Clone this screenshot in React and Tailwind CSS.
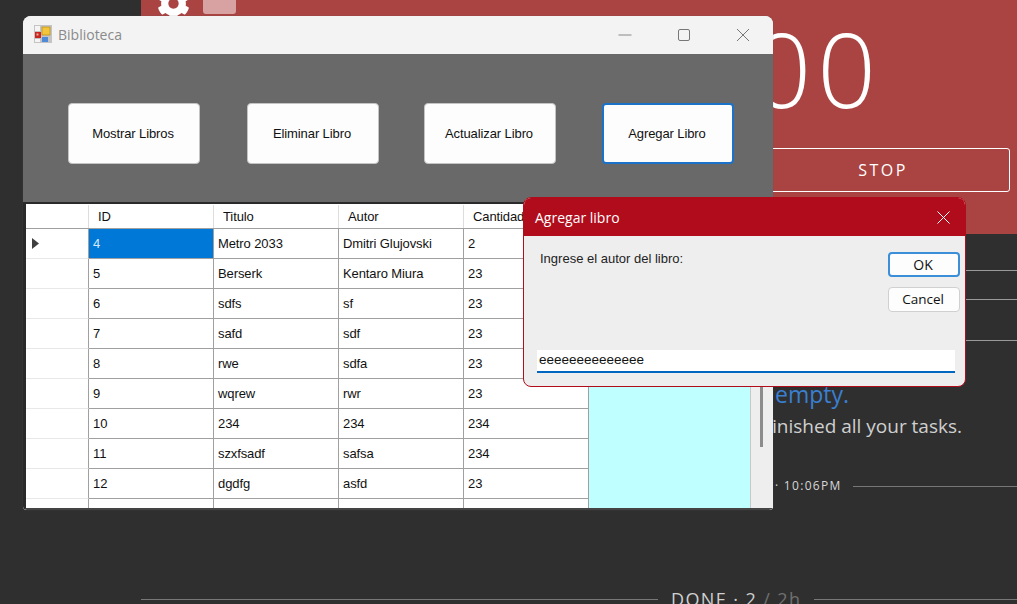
import React from "react";
import { FaCog } from "react-icons/fa";

const rows = [
  ["4", "Metro 2033", "Dmitri Glujovski", "2"],
  ["5", "Berserk", "Kentaro Miura", "23"],
  ["6", "sdfs", "sf", "23"],
  ["7", "safd", "sdf", "23"],
  ["8", "rwe", "sdfa", "23"],
  ["9", "wqrew", "rwr", "23"],
  ["10", "234", "234", "234"],
  ["11", "szxfsadf", "safsa", "234"],
  ["12", "dgdfg", "asfd", "23"],
  ["13", "asdfas", "asdfa", "435"],
];

const sans = "font-['Open_Sans','Noto_Sans',sans-serif]";
const ms = "font-['Liberation_Sans',Arial,sans-serif]";

function WinButton({ children, className }) {
  return (
    <button className={"h-[61px] w-[132px] rounded-[4px] bg-[#fdfdfd] pr-[2px] text-[13px] tracking-[-0.1px] text-[#111] " + ms + " " + className}>
      {children}
    </button>
  );
}

export default function App() {
  return (
    <div className={"relative h-[604px] w-[1017px] overflow-hidden bg-[#2f2f2f] " + sans}>
      {/* background app */}
      <div className="ml-[141px] flex flex-col">
        <div className="relative flex h-[234px] flex-col items-end bg-[#a94442] text-white">
          <div className="absolute left-[16px] top-[-13px]">
            <FaCog size={33} color="#fff" />
          </div>
          <div className="absolute left-[62px] top-0 h-[14px] w-[33px] rounded-b-[3px] bg-[#d9a2a2]" />
          <div className="mr-[135px] mt-[3px] h-[130px] text-[103px] font-light leading-[130px] tracking-[6px]">00</div>
          <div className="mr-[7px] mt-[15px] flex h-[44px] w-[254px] items-center justify-center rounded-[3px] border border-white text-[16px] tracking-[2.5px]">
            STOP
          </div>
        </div>
        <div className="ml-auto mt-[36px] h-px w-[51px] bg-[#9a9a9a]" />
        <div className="ml-auto mt-[28px] h-px w-[51px] bg-[#9a9a9a]" />
        <div className="ml-auto mt-[40px] h-px w-[51px] bg-[#9a9a9a]" />
        <div className="mt-[37px] pl-[634px] text-[23px] leading-[32px] text-[#3a7fd0]">empty.</div>
        <div className="mt-[3px] pr-[55px] text-right text-[19px] leading-[27px] text-[#cfcfcf]">finished all your tasks.</div>
        <div className="mt-[38px] flex h-4 items-center">
          <div className="ml-[634px] w-[78px] whitespace-nowrap text-[12px] leading-4 tracking-[1.3px] text-[#d6d6d6]">· 10:06PM</div>
          <div className="h-px flex-1 bg-[#777]" />
        </div>
        <div className="mt-[93px] flex h-6 items-center">
          <div className="h-px w-[517px] bg-[#777]" />
          <div className="mx-[13px] whitespace-nowrap text-[18px] leading-6 tracking-[1.4px] text-[#d0d0d0]">
            DONE · 2 <span className="text-[#707070]">/ 2h</span>
          </div>
          <div className="h-px flex-1 bg-[#777]" />
        </div>
      </div>

      {/* Biblioteca window */}
      <div className="absolute left-[23px] top-[16px] flex h-[494px] w-[750px] flex-col overflow-hidden rounded-t-[8px] rounded-b-[4px] bg-[#f3f3f3] shadow-[0_0_1px_#555]">
        <div className="flex h-[38px] items-center bg-[#f3f3f3]">
          <svg width="18" height="18" viewBox="0 0 18 18" className="mb-[2px] ml-[11px]">
            <rect x="0" y="0" width="18" height="18" fill="#c4c4c4" />
            <rect x="1" y="1" width="5" height="5" fill="#f4f4f4" />
            <rect x="1" y="7" width="6" height="6" fill="#c8261e" />
            <rect x="2.5" y="8.5" width="2" height="2" fill="#f0b0a0" />
            <rect x="8" y="2" width="8" height="8" fill="#f3c53c" stroke="#b98a10" strokeWidth="0.7" />
            <rect x="8" y="12" width="6" height="5" fill="#4f8ad8" />
            <rect x="1" y="14" width="5" height="3" fill="#f4f4f4" />
          </svg>
          <span className={"mb-[2px] ml-[6px] text-[14px] text-[#8a8a8a] " + sans}>Biblioteca</span>
          <div className="ml-auto flex items-center">
            <svg width="14" height="14" viewBox="0 0 14 14" className="mr-[45px]"><path d="M0.5 7h13" stroke="#888" strokeWidth="1" /></svg>
            <svg width="14" height="14" viewBox="0 0 14 14" className="mr-[45px]"><rect x="1.5" y="1.5" width="11" height="11" rx="1.5" fill="none" stroke="#777" strokeWidth="1" /></svg>
            <svg width="14" height="14" viewBox="0 0 14 14" className="mr-[23px]"><path d="M1 1l12 12M13 1L1 13" stroke="#777" strokeWidth="1" /></svg>
          </div>
        </div>
        <div className="flex h-[148px] items-start bg-[#696969] pt-[49px]">
          <WinButton className="ml-[45px] border border-[#c4c4c4]">Mostrar Libros</WinButton>
          <WinButton className="ml-[47px] border border-[#c4c4c4]">Eliminar Libro</WinButton>
          <WinButton className="ml-[45px] border border-[#c4c4c4]">Actualizar Libro</WinButton>
          <WinButton className="ml-[46px] border-2 border-[#1a73c8]">Agregar Libro</WinButton>
        </div>
        <div className="flex min-h-0 flex-1 border-y-2 border-l-[3px] border-[#2a2a2a] border-b-[#444] bg-white">
          <div className="w-[563px] shrink-0 overflow-hidden">
            <div className={"grid h-[25px] grid-cols-[63px_125px_125px_125px_125px] border-b border-[#a0a0a0] pt-[1px] text-[13px] tracking-[-0.1px] text-[#111] " + ms}>
              <div className="border-r border-[#ddd]" />
              {["ID", "Titulo", "Autor", "Cantidad"].map((h) => (
                <div key={h} className="flex items-center border-r border-[#ddd] pl-[9px]">{h}</div>
              ))}
            </div>
            {rows.map((r, i) => (
              <div key={r[0]} className={"grid h-[30px] grid-cols-[63px_125px_125px_125px_125px] text-[13px] tracking-[-0.1px] text-[#111] " + ms}>
                <div className="flex items-center border-r border-b border-r-[#a0a0a0] border-b-[#e8e8e8] pl-[6px]">
                  {i === 0 && (
                    <svg width="7" height="11" viewBox="0 0 7 11"><path d="M0 0l7 5.5L0 11z" fill="#404040" /></svg>
                  )}
                </div>
                {r.map((c, j) => (
                  <div
                    key={j}
                    className={
                      "flex items-center border-r border-b border-[#a0a0a0] pl-[4px] pt-[1px] " +
                      (i === 0 && j === 0 ? "bg-[#0078d7] text-[#d5e8fa]" : "")
                    }
                  >
                    {c}
                  </div>
                ))}
              </div>
            ))}
          </div>
          <div className="flex-1 bg-[#bfffff]" />
          <div className="relative w-[23px] shrink-0 border-l border-[#c8c8c8] bg-[#eeeeee]">
            <div className="absolute left-[9px] top-[30px] h-[213px] w-[3px] bg-[#8c8c8c]" />
          </div>
        </div>
      </div>

      {/* dialog */}
      <div className={"absolute left-[523px] top-[197px] flex h-[190px] w-[443px] flex-col overflow-hidden rounded-[8px] border border-[#b10c1b] bg-[#eeeeee] " + sans}>
        <div className="flex h-[38px] shrink-0 items-center justify-between bg-[#b10c1b] pl-[11px] pr-[15px] text-[14px] text-white">
          <span>Agregar libro</span>
          <svg width="13" height="13" viewBox="0 0 13 13"><path d="M0.5 0.5l12 12M12.5 0.5l-12 12" stroke="#fff" strokeWidth="1" /></svg>
        </div>
        <div className="relative flex flex-1 flex-col">
          <div className="flex">
            <span className={"ml-[16px] mt-[13px] text-[13px] text-[#222] " + ms}>Ingrese el autor del libro:</span>
            <div className="ml-auto mr-[5px] mt-[16px] flex w-[72px] flex-col gap-[10px]">
              <button className={"h-[25px] rounded-[4px] border-2 border-[#3b8fd8] bg-[#fdfdfd] pr-[2px] text-[14px] leading-[18px] text-[#111] " + sans}>OK</button>
              <button className={"h-[25px] rounded-[4px] border border-[#d0d0d0] bg-[#fdfdfd] pb-[2px] pr-[2px] text-[13.5px] leading-[18px] text-[#111] " + sans}>Cancel</button>
            </div>
          </div>
          <div className={"ml-[13px] mt-[38px] flex h-[23px] w-[418px] items-center border-b-2 border-[#0067c0] bg-white pl-[2px] text-[13.5px] text-[#111] " + ms}>
            eeeeeeeeeeeeee
          </div>
        </div>
      </div>
    </div>
  );
}
